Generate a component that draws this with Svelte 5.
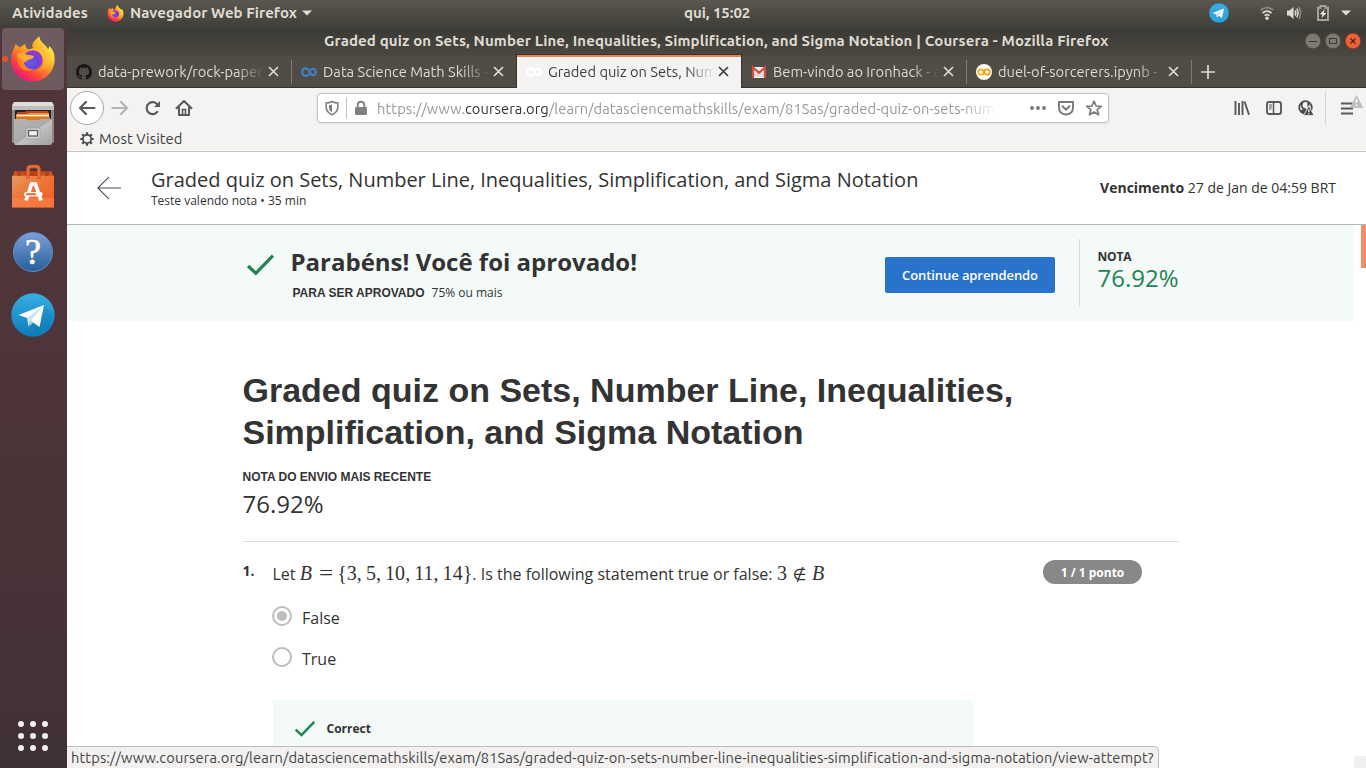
<script>
  const tabs = [
    { icon: 'github', title: 'data-prework/rock-paper', cls: 't1' },
    { icon: 'coursera', title: 'Data Science Math Skills -', cls: 't2' },
    { icon: 'coursera', title: 'Graded quiz on Sets, Num', active: true, cls: 't3' },
    { icon: 'gmail', title: 'Bem-vindo ao Ironhack - a', cls: 't4' },
    { icon: 'colab', title: 'duel-of-sorcerers.ipynb -', cls: 't5' },
  ];
  const options = [
    { label: 'False', checked: true },
    { label: 'True', checked: false },
  ];
  const dots = [0, 1, 2, 3, 4, 5, 6, 7, 8];
</script>

{#snippet firefox(size, id)}
  <svg width={size} height={size} viewBox="0 0 48 48">
    <defs>
      <linearGradient id="{id}a" x1="0.8" y1="0.1" x2="0.2" y2="0.95">
        <stop offset="0" stop-color="#fff44f" /><stop offset="0.3" stop-color="#ffc02c" />
        <stop offset="0.55" stop-color="#ff7a25" /><stop offset="0.78" stop-color="#ff3a45" /><stop offset="1" stop-color="#e31587" />
      </linearGradient>
      <radialGradient id="{id}b" cx="0.35" cy="0.65" r="0.8">
        <stop offset="0" stop-color="#5a5ff0" /><stop offset="0.5" stop-color="#7040d8" /><stop offset="1" stop-color="#b833c9" />
      </radialGradient>
      <linearGradient id="{id}c" x1="1" y1="0" x2="0" y2="1">
        <stop offset="0" stop-color="#fff44f" /><stop offset="0.5" stop-color="#ffb52b" /><stop offset="1" stop-color="#ff6a24" />
      </linearGradient>
    </defs>
    <path d="M6 8 C7 10 9 11 11 12 C12 10 14 9 16 8.500 C16 11 17 12.500 19 14 L27 12 C23 9 26 4 30.500 0.500 C31 7 37 8 39.500 14 C40.500 13 41 12 41 10.500 C45 14 46.800 19 46.600 25 C46 38 36 47.300 24 47.300 C11 47.300 1.200 37.500 1.200 25 C1.200 18 4 13 6 8 Z" fill="url(#{id}a)" />
    <circle cx="24" cy="25" r="10.200" fill="url(#{id}b)" />
    <path d="M25 13 C31 13 36.500 18 36 25 C36 31 32 36 25 37 C36 37 43 31 43 23 C43 18 40 12 34 8 C31 6 30 4 30.500 0.500 C24 5 21 11 25 13 Z" fill="url(#{id}c)" />
    <path d="M8 20 C11 18 14 18.500 17 19.500 C20 20.500 23 20.500 25 21 C24.500 24 21.500 24 19 25 C17 27 16 28 14.500 27.500 C15 32 19 35 24 35 C19 38 12 36 9 30 C7.500 26 7 23 8 20 Z" fill="#ff8428" />
    <path d="M7 19 C11 17 14 17 17 19.500 C21 20 24 20 25 21.500 C23 24.500 20 23.500 18 25 C15 28 12 26 10 22.500 Z" fill="#ffad2e" />
  </svg>
{/snippet}

{#snippet plane(size, light)}
  <svg width={size} height={size} viewBox="0 0 44 44">
    <defs><linearGradient id="tg{size}" x1="0" y1="0" x2="0" y2="1"><stop offset="0" stop-color="#37aee2" /><stop offset="1" stop-color={light ? '#2ba0dc' : '#0c7cb9'} /></linearGradient></defs>
    <circle cx="22" cy="22" r="21.700" fill="url(#tg{size})" />
    {#if light}
      <path d="M8 22 L33 12 L28.500 33 L21.500 28 L17.500 32 L15.500 25.500 Z" fill="#fff" />
      <path d="M15.500 25.500 L29 16.500 L20 26.500 L17.500 32 Z" fill="#a9d4ee" />
    {:else}
      <path d="M33 13 L42.500 22 C42.500 32 36 40 27 42 L20 31 Z" fill="#056ba5" opacity="0.180" />
      <path d="M7.500 22 L33 12 L28.500 34 L16 25 Z" fill="#fff" />
      <path d="M16 25 L33 12 L20 27.500 L17.500 33.500 Z" fill="#cfe3ef" /><path d="M20 27.500 L22.500 29.500 L17.500 33.500 Z" fill="#b0cfe1" />
    {/if}
  </svg>
{/snippet}

{#snippet check(w, h)}
  <svg width={w} height={h} viewBox="0 0 28 22"><path d="M2 12.500 L9.500 19.500 L26 2.500" fill="none" stroke="#1f8354" stroke-width="3.200" /></svg>
{/snippet}

<div class="desktop">
  <header class="topbar">
    <span class="activities">Atividades</span>
    <span class="applogo">{@render firefox(17, 'fs')}</span>
    <span class="appname">Navegador Web Firefox</span>
    <svg class="apparrow" width="10" height="6"><path d="M0 0.500H10L5 5.500Z" fill="#dfdbd2" /></svg>
    <span class="clock">qui, 15:02</span>
    <div class="tray">
      {@render plane(20, true)}
      <svg class="wifi" width="16" height="16" viewBox="0 0 16 16" fill="none" stroke="#dfdbd2" stroke-width="1.700">
        <path d="M1.500 5.200Q8 0 14.500 5.200" stroke="#8c8982" /><path d="M3.500 8Q8 4.300 12.500 8" /><path d="M5.600 10.700Q8 8.700 10.400 10.700" /><circle cx="8" cy="13.300" r="1.700" fill="#dfdbd2" stroke="none" />
      </svg>
      <svg class="sound" width="16" height="16" viewBox="0 0 16 16" fill="none" stroke="#dfdbd2" stroke-width="1.500">
        <path d="M1 5.500H3.500L7.500 2V14L3.500 10.500H1Z" fill="#dfdbd2" stroke="none" /><path d="M9 5.500Q10.700 8 9 10.500M10.800 3.700Q13.300 8 10.800 12.300" /><path d="M12.800 2Q16.500 8 12.800 14" stroke="#8c8982" />
      </svg>
      <svg class="battery" width="12" height="16" viewBox="0 0 12 16"><path d="M1 2.800H3.500V1H8.500V2.800H11V15H1Z" fill="none" stroke="#a5a29a" stroke-width="2" /><path d="M8 4L2.800 9.300H5.500L4.500 13L9.400 7.900H6.500Z" fill="#f3f0e8" /></svg>
      <svg class="trayarrow" width="10" height="6"><path d="M0 0.500H10L5 5.500Z" fill="#dfdbd2" /></svg>
    </div>
  </header>

  <div class="work">
    <aside class="dock">
      <div class="slot current"><i></i>{@render firefox(46, 'fb')}</div>
      <div class="slot files">
        <svg width="44" height="46" viewBox="0 0 44 46">
          <defs>
            <linearGradient id="cab" x1="0" y1="0" x2="1" y2="1"><stop offset="0" stop-color="#b4b4b4" /><stop offset="0.5" stop-color="#aaaaaa" /><stop offset="0.51" stop-color="#c2c2c2" /><stop offset="1" stop-color="#a2a2a2" /></linearGradient>
          </defs>
          <rect x="1" y="2" width="42" height="40" rx="1.500" fill="#8b8b8b" /><path d="M3 1H41L43 6H1Z" fill="#dedede" /><path d="M1 5H43V9H1Z" fill="#bdbdbd" />
          <rect x="4" y="9" width="36" height="10" fill="#242321" /><path d="M6 17V11H14L15 10H37L38 17Z" fill="#b9481b" /><path d="M5 13H16L18 12H38V20H5Z" fill="#ee913d" /><path d="M6 14.500H38" stroke="#fff5df" stroke-width="1.300" /><path d="M5 16H39V19H5Z" fill="#d67925" />
          <path d="M3 18H15L16 19H28L29 18H41V42Q41 44 39 44H5Q3 44 3 42Z" fill="url(#cab)" /><rect x="15" y="27" width="14" height="11" rx="2" fill="#d2d2d2" stroke="#909090" stroke-width="0.600" /><rect x="17.500" y="29.500" width="9" height="5.500" fill="#f3f3f3" stroke="#5d5d5d" stroke-width="1.300" />
        </svg>
      </div>
      <div class="slot shop">
        <svg width="44" height="46" viewBox="0 0 44 46">
          <defs><linearGradient id="bag" x1="0" y1="0" x2="1" y2="1"><stop offset="0" stop-color="#e49a5c" /><stop offset="0.5" stop-color="#ef7134" /><stop offset="1" stop-color="#f25e22" /></linearGradient></defs>
          <path d="M3 7H41V15H3Z" fill="#b44318" /><path d="M1 13L4 7L8 13L12 8L16 13H28L32 8L36 13L40 7L43 13Z" fill="#d85622" /><rect x="1" y="12" width="42" height="31.500" fill="url(#bag)" /><path d="M1 34H43V43.500H1Z" fill="#ff8f58" opacity="0.450" />
          <path d="M17 15V6Q17 2.500 20 2.500H25Q28 2.500 28 6V15" fill="none" stroke="#dc5b2b" stroke-width="3.500" /><path d="M17 14V6Q17 2.500 20 2.500H25Q28 2.500 28 6V14" fill="none" stroke="#ef7644" stroke-width="1.200" />
          <path d="M15 36.500L20.500 20H24.500L30 36.500" fill="none" stroke="#fff" stroke-width="3.700" /><rect x="13" y="28" width="18.500" height="4.500" rx="2.200" fill="#fff" /><path d="M15 30.200H25" stroke="#f06628" stroke-width="2" />
        </svg>
      </div>
      <div class="slot help"><span>?</span></div>
      <div class="slot tele">{@render plane(44, false)}</div>
      <div class="apps">{#each dots as d (d)}<i></i>{/each}</div>
    </aside>

    <section class="browser">
      <div class="titlebar">
        <span class="wintitle">Graded quiz on Sets, Number Line, Inequalities, Simplification, and Sigma Notation | Coursera - Mozilla Firefox</span>
        <div class="controls">
          <svg width="16" height="16"><circle cx="8" cy="8" r="7.700" fill="#7c7a73" stroke="#45443e" stroke-width="0.600" /><path d="M4 8.500H12" stroke="#3b3934" /></svg>
          <svg width="16" height="16"><circle cx="8" cy="8" r="7.700" fill="#7c7a73" stroke="#45443e" stroke-width="0.600" /><rect x="4.500" y="5.500" width="7" height="5" fill="none" stroke="#3b3934" /></svg>
          <svg width="16" height="16"><circle cx="8" cy="8" r="7.700" fill="#ef6237" stroke="#7b3420" stroke-width="0.600" /><path d="M5.500 5.500L10.500 10.500M10.500 5.500L5.500 10.500" stroke="#4a2418" stroke-width="1.200" /></svg>
        </div>
      </div>

      <div class="tabs">
        {#each tabs as tab (tab.cls)}
          <div class="tab {tab.cls}" class:active={tab.active}>
            <span class="favicon">
              {#if tab.icon === 'github'}
                <svg width="16" height="16" viewBox="0 0 16 16"><path fill="#171717" d="M8 0C3.580 0 0 3.580 0 8c0 3.540 2.290 6.530 5.470 7.590.4.070.55-.17.55-.38 0-.19-.01-.82-.01-1.490-2.010.37-2.530-.49-2.690-.94-.09-.23-.48-.94-.82-1.130-.28-.15-.68-.52-.01-.53.63-.01 1.080.58 1.230.82.72 1.210 1.870.87 2.330.66.07-.52.28-.87.51-1.070-1.780-.2-3.640-.89-3.640-3.950 0-.87.31-1.590.82-2.150-.08-.2-.36-1.020.08-2.120 0 0 .67-.21 2.200.82.64-.18 1.320-.27 2-.27s1.360.09 2 .27c1.530-1.040 2.200-.82 2.200-.82.44 1.100.16 1.920.08 2.120.51.56.82 1.270.82 2.150 0 3.070-1.870 3.750-3.650 3.950.29.25.54.73.54 1.480 0 1.070-.01 1.930-.01 2.200 0 .21.15.46.55.38A8.010 8.010 0 0016 8c0-4.420-3.580-8-8-8z" /></svg>
              {:else if tab.icon === 'coursera'}
                <svg width="16" height="16" viewBox="0 0 16 16"><path d="M8.300 9.800C5.500 13.500 1.200 11.500 1.200 8S5.500 2.700 7.700 6.200C8.300 7.200 8.700 8.400 9.500 9.500C11.300 12.500 14.800 11 14.800 8S11.500 3.800 9.600 6.100" fill="none" stroke={tab.active ? '#ffffff' : '#3f83c6'} stroke-width="2.200" /><path d="M9.500 6.300L8.200 8" fill="none" stroke={tab.active ? '#ffffff' : '#3f83c6'} stroke-width="1.100" /></svg>
              {:else if tab.icon === 'gmail'}
                <svg width="16" height="16" viewBox="0 0 16 16"><rect x="1" y="3" width="14" height="11" rx="1" fill="#f5f5f5" /><path d="M3 13V5L8 9.500L13 5V13Z" fill="#dcdcdc" /><path d="M2 14V3.500L8 8.800L14 3.500V14" fill="none" stroke="#d54b3d" stroke-width="2.200" /></svg>
              {:else}
                <svg width="16" height="16" viewBox="0 0 16 16"><circle cx="8" cy="8" r="8" fill="#fff" /><circle cx="5" cy="8" r="2.700" fill="none" stroke="#f9ab00" stroke-width="1.700" /><circle cx="11" cy="8" r="2.700" fill="none" stroke="#f29900" stroke-width="1.700" /></svg>
              {/if}
            </span>
            <span class="tabtitle">{tab.title}</span>
            <svg class="close" width="11" height="11"><path d="M1 1L10 10M10 1L1 10" stroke="currentColor" stroke-width="1.700" /></svg>
          </div>
        {/each}
        <svg class="newtab" width="14" height="14"><path d="M7 0V14M0 7H14" stroke="#dedbd3" stroke-width="1.700" /></svg>
      </div>

      <div class="toolbar">
        <div class="back"><svg width="18" height="16" viewBox="0 0 18 16"><path d="M16.500 8H2M8 2L2 8L8 14" /></svg></div>
        <svg class="forward" width="18" height="16" viewBox="0 0 18 16"><path d="M1.500 8H16M10 2L16 8L10 14" /></svg>
        <svg class="reload" width="18" height="16" viewBox="0 0 18 16"><path d="M13.800 11.200A6 6 0 1 1 14 5.500" stroke-width="2.100" /><path d="M16 1V7H10Z" fill="#595959" stroke="none" /></svg>
        <svg class="home" width="18" height="18" viewBox="0 0 18 18"><path d="M1.500 9.200L9 2L16.500 9.200M4 8.500V16H14V8.500" stroke-width="2" stroke-linecap="round" stroke-linejoin="round" /><path d="M7.500 16V10.500H10.500V16" stroke-width="1.600" /></svg>
        <div class="urlbar">
          <svg class="shield" width="14" height="16" viewBox="0 0 14 16"><path d="M7 1.500C5 2.700 3 3 1.200 3V7C1.200 11 3 13 7 14.700C11 13 12.800 11 12.800 7V3C11 3 9 2.700 7 1.500Z" fill="none" stroke="#7c7c7c" stroke-width="1.500" /><path d="M7 4.300C6 4.900 5 5.100 4 5.200V7.500C4 9.800 5 11 7 12Z" fill="#7c7c7c" /></svg>
          <i class="urldiv"></i>
          <svg class="lock" width="14" height="16" viewBox="0 0 14 16"><rect x="1" y="7" width="12" height="8" rx="1.200" fill="#818181" /><path d="M3.800 7V5Q3.800 1.700 7 1.700T10.200 5V7" fill="none" stroke="#818181" stroke-width="1.900" /></svg>
          <span class="url">https://www.<b>coursera.org</b>/learn/datasciencemathskills/exam/81Sas/graded-quiz-on-sets-num</span>
          <svg class="more" width="16" height="4"><circle cx="2" cy="2" r="1.900" /><circle cx="8" cy="2" r="1.900" /><circle cx="14" cy="2" r="1.900" /></svg>
          <svg class="pocket" width="16" height="16" viewBox="0 0 16 16"><path d="M1 2H15V7.500Q15 14 8 14.500Q1 14 1 7.500Z" fill="none" stroke="#7b7b7b" stroke-width="1.900" stroke-linejoin="round" /><path d="M4.500 6.200L8 9.600L11.500 6.200" fill="none" stroke="#7b7b7b" stroke-width="2" stroke-linecap="round" /></svg>
          <svg class="star" width="16" height="16" viewBox="0 0 16 16"><path d="M8 1.200L10 6L15.200 6.400L11.200 9.700L12.500 14.800L8 12L3.500 14.800L4.800 9.700L0.800 6.400L6 6Z" fill="none" stroke="#7b7b7b" stroke-width="1.700" stroke-linejoin="round" /></svg>
        </div>
        <div class="tools">
          <svg width="16" height="16" viewBox="0 0 16 16"><path d="M1.500 1V15M5 3V15M8.500 1V15M10.500 1.500L15 14.800" stroke-width="1.900" /></svg>
          <svg width="16" height="16" viewBox="0 0 16 16"><rect x="1" y="2" width="14" height="12" rx="2" stroke-width="1.900" /><path d="M7.500 2V14" stroke-width="1.500" /><path d="M3 5H6M3 7H6M3 9H5.500" stroke-width="1" /></svg>
          <svg width="16" height="16" viewBox="0 0 16 16"><circle cx="7.500" cy="7.500" r="6.300" stroke="#4c4c4c" stroke-width="1.800" /><path d="M1.500 10.500L5 9.500Q4.500 8 5.500 7.500L9 9L7 14Q4 13.500 1.500 10.500Z" fill="#4c4c4c" stroke="none" /><path d="M4.500 2L3.500 5.500L5 9M9.500 3Q11.500 5 10 7.500" stroke="#4c4c4c" stroke-width="1.800" /><path d="M10.800 5.800L16 15.500H5.600Z" fill="#4c4c4c" stroke="#f4f3f2" stroke-width="0.800" /><path d="M10.800 9.200V12M10.800 13V14.300" stroke="#f4f3f2" stroke-width="1.300" /></svg>
        </div>
        <i class="tooldiv"></i>
        <div class="menu">
          <svg width="13" height="13" viewBox="0 0 13 13"><path d="M0 1.500H12M0 6.500H12M0 11.500H12" stroke-width="2" /></svg>
          <svg class="warn" width="13" height="13" viewBox="0 0 13 13"><path d="M6.500 0.700L12.500 12.300H0.500Z" fill="#bdbdbd" stroke="#bdbdbd" stroke-width="1" stroke-linejoin="round" /><path d="M6.500 4V8M6.500 9.500V11" stroke="#fff" stroke-width="1.500" /></svg>
        </div>
      </div>

      <div class="bookmarks">
        <svg width="14" height="14" viewBox="0 0 14 14" fill="none" stroke="#4a4a4a"><circle cx="7" cy="7" r="4.100" stroke-width="1.700" /><path d="M7 0.300V2.800M7 11.200V13.700M0.300 7H2.800M11.200 7H13.700M2.200 2.200L4 4M10 10L11.800 11.800M11.800 2.200L10 4M4 10L2.200 11.800" stroke-width="2.200" /></svg>
        <span>Most Visited</span>
      </div>

      <div class="quizhead">
        <svg class="goback" width="24" height="24" viewBox="0 0 24 24"><path d="M24 12H1M12 0.800L0.800 12L12 23.200" fill="none" stroke="#4a4c58" stroke-width="1.100" /></svg>
        <div class="names">
          <div class="quizname">Graded quiz on Sets, Number Line, Inequalities, Simplification, and Sigma Notation</div>
          <div class="quizmeta">Teste valendo nota • 35 min</div>
        </div>
        <div class="due"><b>Vencimento</b> 27 de Jan de 04:59 BRT</div>
      </div>

      <div class="viewport">
        <main>
          <section class="banner">
            <div class="bcheck">{@render check(29, 23)}</div>
            <div class="congrats">
              <h2>Parabéns! Você foi aprovado!</h2>
              <p><b>PARA SER APROVADO</b><span>75% ou mais</span></p>
            </div>
            <button>Continue aprendendo</button>
            <div class="grade"><b>NOTA</b><span>76.92%</span></div>
          </section>

          <article>
            <h1>Graded quiz on Sets, Number Line, Inequalities,<br />Simplification, and Sigma Notation</h1>
            <div class="recent">NOTA DO ENVIO MAIS RECENTE</div>
            <div class="score">76.92%</div>
            <hr />
            <div class="question">
              <b class="qnum">1.</b>
              <div class="prompt">Let <span class="math m1"><em>B</em><span class="eq">=</span>&#123;3,<s></s>5,<s></s>10,<s></s>11,<s></s>14&#125;</span>. Is the following statement true or false: <span class="math m2">3<span class="notin">∉</span><em>B</em></span></div>
              <span class="points">1 / 1 ponto</span>
            </div>
            <div class="options">
              {#each options as o (o.label)}
                <div class="option"><i class:checked={o.checked}></i><span>{o.label}</span></div>
              {/each}
            </div>
            <div class="feedback">{@render check(22, 17)}<b>Correct</b></div>
          </article>
        </main>
        <div class="scroll"><i class="thumb"></i><i class="corner"></i></div>
      </div>
    </section>
  </div>
  <div class="status">https://www.coursera.org/learn/datasciencemathskills/exam/81Sas/graded-quiz-on-sets-number-line-inequalities-simplification-and-sigma-notation/view-attempt?</div>
</div>

<style>
  :global(body) { margin: 0; overflow: hidden; }
  * { box-sizing: border-box; }
  svg { display: block; flex: none; }
  .desktop { width: 1366px; height: 768px; position: relative; overflow: hidden; display: flex; flex-direction: column; font-family: Ubuntu, "Noto Sans", sans-serif; background: #fff; color: #333; white-space: nowrap; }
  .topbar { height: 28px; flex: none; display: flex; align-items: center; background: linear-gradient(#5a574f, #3f3e38); color: #dfdbd2; font-size: 15px; font-weight: 600; line-height: 26px; padding: 0 15px 2px 12px; }
  .activities { width: 95px; letter-spacing: 0.08px; }
  .applogo { width: 23px; }
  .appname { width: 172px; letter-spacing: 0.07px; }
  .clock { margin-left: 372px; letter-spacing: -0.05px; }
  .tray { margin-left: auto; display: flex; align-items: center; }
  .wifi { margin-left: 30px; }
  .sound { margin-left: 11px; }
  .battery { margin-left: 15px; }
  .trayarrow { margin-left: 12px; }

  .work { flex: 1; display: flex; min-height: 0; }
  .dock { width: 67px; flex: none; padding-right: 1px; background: linear-gradient(#50363a 0, #4e3539 45%, #433136 92%, #3d3033 100%); display: flex; flex-direction: column; align-items: center; }
  .slot { width: 62px; height: 62px; display: flex; align-items: center; justify-content: center; flex: none; }
  .current { background: #6e5b5f; border-radius: 4px; position: relative; }
  .current i { position: absolute; left: 0; top: 28px; width: 6px; height: 6px; border-radius: 3px; background: #e95420; }
  .files { margin-top: 3px; }
  .help { margin-top: 3px; }
  .shop { margin-top: 1px; }
  .help span { width: 40px; height: 40px; border-radius: 50%; background: linear-gradient(#7c9fd6, #27609b); border: 1px solid #5f8fc4; color: #fff; font: 400 36px/39px "Liberation Serif", serif; -webkit-text-stroke: 0.6px #fff; text-align: center; }
  .tele { margin-top: 1px; }
  .apps { margin-top: auto; margin-bottom: 17px; display: grid; grid-template-columns: repeat(3, 6px); gap: 6px; }
  .apps i { width: 6px; height: 6px; border-radius: 50%; background: #f2f1f0; }

  .browser { flex: 1; min-width: 0; display: flex; flex-direction: column; }
  .titlebar { height: 28px; flex: none; display: flex; align-items: center; background: linear-gradient(#3a3934, #4b4841); color: #dfdbd2; padding: 0 5px 2px 257px; }
  .wintitle { font-size: 15px; font-weight: 700; letter-spacing: 0.13px; padding-bottom: 2px; }
  .controls { margin-left: auto; display: flex; gap: 4px; }
  .tabs { height: 32px; flex: none; display: flex; background: #504d46; border-bottom: 1px solid #35342f; align-items: center; }
  .tab { width: 225px; height: 32px; flex: none; display: flex; align-items: center; padding-left: 9px; color: #dedbd3; position: relative; border-right: 1px solid transparent; }
  .tab::after { content: ""; position: absolute; right: -1px; top: 4px; width: 1px; height: 24px; background: #7f7c75; }
  .active::after, .t2::after { display: none; }
  .tab.active { background: #f4f3f2; color: #3d3d3d; height: 34px; border: solid #35342f; border-width: 1px 1px 0; margin: -1px 0 0 -1px; width: 226px; box-shadow: inset 0 2px #f17d52; }
  .favicon { width: 22px; }
  .tabtitle { width: 165px; overflow: hidden; font-size: 14.667px; line-height: 22px; mask-image: linear-gradient(90deg, #000 138px, transparent 167px); }
  .close { margin-left: 5px; }
  .newtab { margin-left: 9px; }

  .toolbar { height: 40px; flex: none; background: #f4f3f2; display: flex; align-items: center; padding-left: 3px; stroke: #595959; stroke-width: 2.200; fill: none; }
  .back { width: 34px; height: 34px; border: 1px solid #a9a9a9; border-radius: 50%; background: #fff; display: flex; align-items: center; justify-content: center; }
  .back svg, .forward { stroke-linecap: round; stroke-linejoin: round; }
  .forward { margin-left: 7px; stroke: #b3b3b3; }
  .reload { margin-left: 15px; }
  .home { margin-left: 13px; }
  .urlbar { margin-left: 124px; width: 792px; height: 30px; border: 1px solid #c3c2c0; border-radius: 4px; background: #fff; display: flex; align-items: center; box-shadow: 0 1px 3px rgba(0,0,0,.06); stroke: none; padding-left: 7px; }
  .urldiv { width: 1px; height: 22px; background: #c3c3c3; margin: 0 7px 0 7px; }
  .url { margin-left: 9px; padding-top: 1px; width: 620px; overflow: hidden; font-size: 14.667px; color: #989898; mask-image: linear-gradient(90deg, #000 585px, transparent 620px); letter-spacing: 0.08px; }
  .url b { color: #333; font-weight: 400; }
  .more { margin-left: 33px; fill: #757575; }
  .pocket { margin-left: 12px; }
  .star { margin-left: 12px; }
  .tools { display: flex; gap: 16px; margin-left: 125px; }
  .tooldiv { width: 1px; height: 34px; background: #d5d4d2; margin-left: 11px; }
  .menu { margin-left: 15px; position: relative; }
  .warn { position: absolute; left: 9px; top: -7px; }
  .bookmarks { height: 24px; flex: none; background: #f4f3f2; border-bottom: 1px solid #c6c4c1; display: flex; align-items: center; padding: 0 0 2px 13px; font-size: 14.667px; letter-spacing: 0.08px; color: #3d3d3d; gap: 5px; }

  .quizhead { height: 73px; flex: none; border-bottom: 1px solid #b3b9b7; display: flex; align-items: center; padding: 0 30px 0 30px; font-family: "Open Sans", sans-serif; color: #333; }
  .names { margin-left: 30px; }
  .quizname { font-size: 20px; line-height: 24px; letter-spacing: -0.01px; }
  .quizmeta { font-size: 12px; line-height: 17px; }
  .due { margin: -1px 0 0 auto; font-size: 14px; }
  .viewport { flex: 1; min-height: 0; display: flex; }
  main { width: 1287px; font-family: "Open Sans", sans-serif; }
  .banner { height: 96px; background: #f4faf8; display: flex; align-items: center; }
  .bcheck { margin-left: 179px; margin-top: -18px; width: 45px; }
  .congrats { width: 594px; margin-left: -0.5px; padding-right: 0.5px; }
  h2 { margin: 0; font-size: 24px; line-height: 34px; font-weight: 700; }
  p { margin: 4px 0 -1px 2px; font-size: 12px; line-height: 20px; display: flex; gap: 7px; }
  p b, .recent { font-family: "Liberation Sans", Arial, sans-serif; font-size: 12px; }
  button { width: 170px; height: 36px; margin: 4px 0 0 0.5px; border: 0; border-radius: 2px; background: #2a73cc; color: #fff; font: 600 13px "Open Sans", sans-serif; letter-spacing: -0.08px; padding: 0; }
  .grade { margin-left: 24px; height: 68px; border-left: 1px solid #d8dddb; padding: 9px 0 0 17.5px; display: flex; flex-direction: column; }
  .grade b { font-size: 12px; line-height: 17px; letter-spacing: -0.2px; }
  .grade span { font-size: 24px; line-height: 26px; color: #1f8354; }
  article { padding: 48px 0 0 175.5px; width: 1111.5px; }
  h1 { margin: 0; font: 700 34px/42px "Liberation Sans", Arial, sans-serif; }
  .recent { font-weight: 700; line-height: 16px; margin-top: 16px; }
  .score { font-size: 24px; line-height: 30px; margin-top: 4px; }
  hr { border: 0; height: 1px; background: #dcdcdc; margin: 22px 0 0 0.5px; }
  .question { height: 64px; display: flex; align-items: center; }
  .qnum { font-size: 14px; width: 30px; margin-top: -7px; }
  .prompt { font-size: 16px; width: 770.5px; display: flex; align-items: baseline; white-space: pre; line-height: 30px; }
  .math { font-family: "Liberation Serif", "Times New Roman", serif; font-size: 20px; display: inline-flex; align-items: baseline; line-height: 24px; }
  .math em { font-style: italic; width: 15px; }
  .m1 { letter-spacing: 0.05px; }
  .math s { width: 4px; }
  .m1 .eq { margin: 0 5px; font-size: 22px; transform: scaleX(1.15); }
  .m2 { margin-left: 0.5px; }
  .notin { font-family: "DejaVu Sans", sans-serif; font-size: 16px; margin: 0 5.5px; }
  .points { width: 99px; height: 24px; border-radius: 12px; background: #888; color: #fff; font-size: 12px; font-weight: 700; line-height: 25px; text-align: center; margin-top: -4px; }
  .options { padding-left: 29.5px; margin-top: -10px; }
  .option { display: flex; align-items: center; height: 41px; font-size: 16px; }
  .option i { width: 20px; height: 20px; border: 2px solid #bdbdbd; border-radius: 50%; display: flex; margin: -2px 10px 0 0; }
  .option span { padding-top: 2px; }
  .option i.checked::before { content: ""; width: 10px; height: 10px; margin: 3px; border-radius: 50%; background: #bdbdbd; }
  .feedback { margin: 22px 0 0 30.5px; width: 700px; height: 60px; background: #f4faf8; display: flex; align-items: center; padding: 0 0 4px 21px; font-size: 12px; gap: 10.5px; }
  .scroll { width: 12px; display: flex; flex-direction: column; justify-content: space-between; align-items: flex-end; }
  .thumb { width: 5px; height: 43px; background: #f28d69; }
  .corner { width: 12px; height: 12px; background: #f1f0ef; }
  .status { position: absolute; left: 67px; bottom: 0; height: 22px; width: 1092px; border: 1px solid #bfbdba; border-width: 1px 1px 0 0; border-radius: 0 5px 0 0; background: #f2f1f0; color: #444; font-size: 14.667px; line-height: 22px; padding-left: 4px; letter-spacing: 0.11px; overflow: hidden; }
</style>
